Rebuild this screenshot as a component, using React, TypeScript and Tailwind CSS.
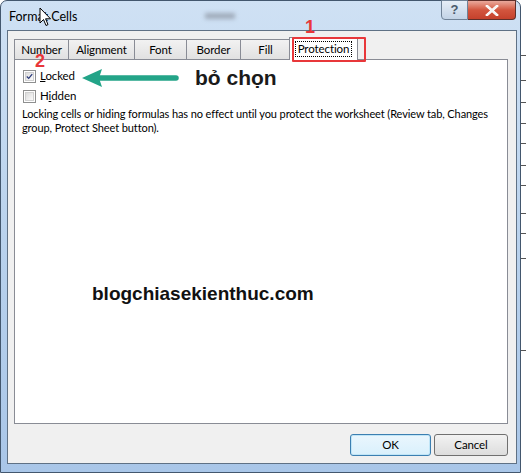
import React from "react";

const ui = { fontFamily: 'Lato, "Noto Sans", sans-serif' };
const arial = { fontFamily: '"Liberation Sans", Arial, sans-serif' };

function Check({ checked }: { checked?: boolean }) {
  return (
    <div className="w-[13px] h-[13px] border border-[#8e8f8f] bg-white p-[1px] flex items-center justify-center">
      <div className="w-full h-full bg-gradient-to-br from-[#dcdcdc] to-[#fbfbfb] border border-[#d0d0d0] flex items-center justify-center">
        {checked && (
          <svg width="9" height="9" viewBox="0 0 9 9">
            <path d="M1 4.5 L3.5 7 L8 1.5" stroke="#2a3a7a" strokeWidth="1.6" fill="none" />
          </svg>
        )}
      </div>
    </div>
  );
}

function Tab({ label, w }: { label: string; w: string }) {
  return (
    <div
      className={`${w} h-[20px] border border-b-0 border-[#898c95] bg-gradient-to-b from-[#f2f2f2] to-[#e1e1e1] flex items-center justify-center text-black -ml-px first:ml-0`}
    >
      {label}
    </div>
  );
}

export default function App() {
  return (
    <div
      className="w-[526px] h-[473px] bg-white flex overflow-hidden relative text-[11.5px] tracking-[-0.1px]"
      style={ui}
    >
      {/* dialog window */}
      <div className="w-[521px] h-[473px] flex flex-col bg-gradient-to-b from-[#cfe1f4] via-[#b9d2ed] to-[#a9c6e8] border border-[#43576e] rounded-t-[7px] pl-[6px] pr-[3px] pb-[8px] relative">
        {/* title bar */}
        <div className="h-[29px] flex items-start relative">
          <span className="mt-[7px] ml-[2px] text-[12.5px] tracking-normal text-black">Format Cells</span>
          <div className="absolute left-[198px] top-[12px] w-[30px] h-[6px] bg-[#8d96a3] blur-[2px] opacity-70" />
          <div className="absolute right-[1px] -top-[1px] flex">
            <div className="w-[27px] h-[20px] border border-[#6f8297] rounded-bl-[4px] bg-gradient-to-b from-[#e6eef7] to-[#c2d3e6] flex items-center justify-center text-[13px] font-bold text-[#4a5a6c]" style={arial}>
              ?
            </div>
            <div className="w-[48px] h-[20px] border border-l-0 border-[#5f2f2a] rounded-br-[4px] bg-gradient-to-b from-[#e9a99c] via-[#d2553e] to-[#c5412c] flex items-center justify-center">
              <svg width="14" height="11" viewBox="0 0 14 11">
                <path d="M2 1 L12 10 M12 1 L2 10" stroke="#fff" strokeWidth="2.6" strokeLinecap="square" />
                <path d="M2 1 L12 10 M12 1 L2 10" stroke="#f5f5f5" strokeWidth="1.6" />
              </svg>
            </div>
          </div>
        </div>

        {/* client area */}
        <div className="flex-1 flex flex-col bg-[#f0f0f0] border border-[#5f7185] pl-[6px] pr-[8px] pt-[5px]">
          {/* tab row */}
          <div className="h-[23px] flex items-end relative z-10">
            <Tab label="Number" w="w-[55px]" />
            <Tab label="Alignment" w="w-[67px]" />
            <Tab label="Font" w="w-[53px]" />
            <Tab label="Border" w="w-[55px]" />
            <Tab label="Fill" w="w-[51px]" />
            <div className="w-[69px] h-[23px] -mb-px -ml-[2px] border border-b-0 border-[#898c95] bg-white flex items-center justify-center">
              <span className="px-[2px] border border-dotted border-black leading-[14px] text-black">Protection</span>
            </div>
          </div>
          {/* panel */}
          <div className="h-[365px] bg-white border border-[#898c95] pl-[8px] pt-[9px] text-black">
            <div className="flex items-center gap-[4px] h-[14px]">
              <Check checked />
              <span><u>L</u>ocked</span>
            </div>
            <div className="flex items-center gap-[4px] h-[14px] mt-[6px]">
              <Check />
              <span>H<u>i</u>dden</span>
            </div>
            <p className="mt-[4px] ml-[-1px] leading-[14px] whitespace-nowrap text-[11px]">
              Locking cells or hiding formulas has no effect until you protect the worksheet (Review tab, Changes
              <br />
              group, Protect Sheet button).
            </p>
          </div>
          {/* buttons */}
          <div className="flex justify-end gap-[3px] mt-[10px]">
            <div className="w-[81px] h-[22px] rounded-[3px] border border-[#3c7fb1] bg-gradient-to-b from-[#eaf6fd] to-[#d9f0fc] shadow-[inset_0_0_0_1px_#c0e5f7] flex items-center justify-center text-black">
              OK
            </div>
            <div className="w-[74px] h-[22px] rounded-[3px] border border-[#707070] bg-gradient-to-b from-[#f2f2f2] to-[#dddddd] flex items-center justify-center text-black">
              Cancel
            </div>
          </div>
        </div>
      </div>

      {/* background sheet strip */}
      <div className="flex-1 h-full bg-white">
        {[55, 80, 102, 123, 143, 165, 185, 213, 233, 258, 350].map((y) => (
          <div key={y} className="absolute right-0 w-[5px] h-px bg-[#555]" style={{ top: y }} />
        ))}
      </div>

      {/* annotations */}
      <div className="absolute z-20 left-[292px] top-[37px] w-[74px] h-[25px] border-2 border-[#e8373a] rounded-[1px]" />
      <span className="absolute z-20 left-[305px] top-[14px] text-[18px] tracking-normal font-bold text-[#e8373a]" style={arial}>1</span>
      <span className="absolute z-20 left-[35px] top-[48px] text-[18px] tracking-normal font-bold text-[#e8373a]" style={arial}>2</span>
      <svg className="absolute z-20 left-[80px] top-[67px]" width="100" height="22" viewBox="0 0 100 22">
        <path d="M18 11 L96 11" stroke="#23a488" strokeWidth="5.5" strokeLinecap="round" />
        <path d="M2 11 L22 2 L19 11 L22 20 Z" fill="#23a488" />
      </svg>
      <span className="absolute z-20 left-[195px] top-[62px] text-[21px] tracking-normal font-bold text-[#1a1a1a]" style={arial}>bỏ chọn</span>
      <span className="absolute z-20 left-[92px] top-[280px] text-[19px] tracking-normal font-bold text-[#111]" style={arial}>blogchiasekienthuc.com</span>

      {/* mouse cursor */}
      <svg className="absolute z-30 left-[39px] top-[7px]" width="13" height="20" viewBox="0 0 13 20">
        <path d="M1 1 L1 16 L4.5 12.5 L7 18.5 L9 17.6 L6.6 11.8 L11.5 11.8 Z" fill="#fff" stroke="#000" strokeWidth="1" strokeLinejoin="round" />
      </svg>
    </div>
  );
}
